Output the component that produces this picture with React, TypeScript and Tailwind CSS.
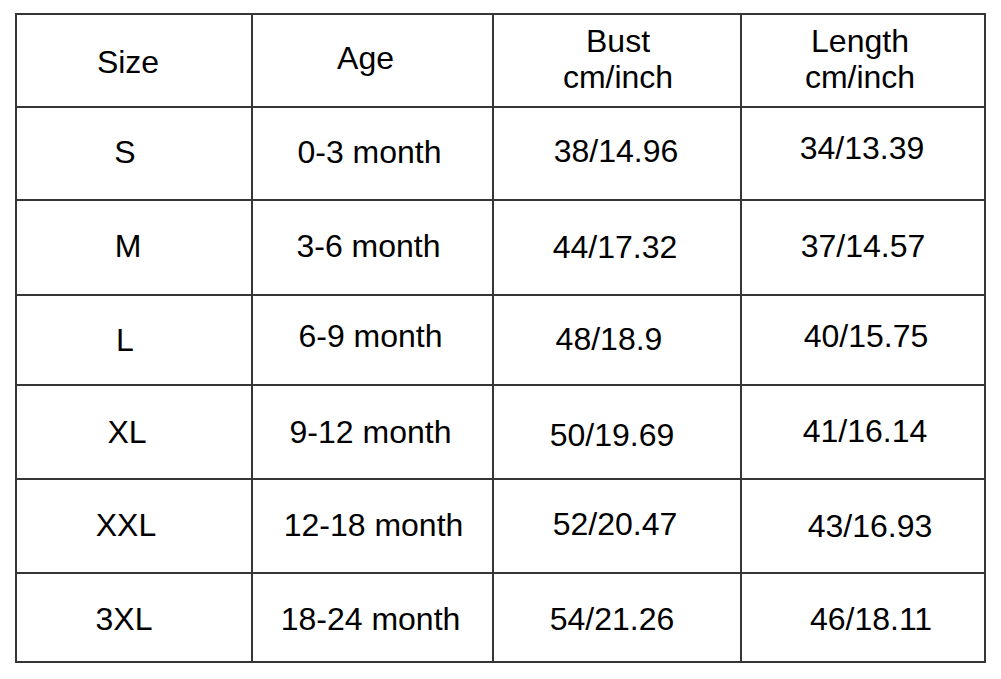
type Cell = { text: string[]; shift?: string };

const rows: Cell[][] = [
  [
    { text: ["Size"], shift: "translate-x-[-6px] translate-y-[2px]" },
    { text: ["Age"], shift: "translate-x-[-7px] translate-y-[-2px]" },
    { text: ["Bust", "cm/inch"], shift: "translate-x-[1px] translate-y-[-1px]" },
    { text: ["Length", "cm/inch"], shift: "translate-x-[-3px] translate-y-[-1px]" },
  ],
  [
    { text: ["S"], shift: "translate-x-[-9px] translate-y-[-1px]" },
    { text: ["0-3 month"], shift: "translate-x-[-3px] translate-y-[-1px]" },
    { text: ["38/14.96"], shift: "translate-x-[-1px] translate-y-[-2px]" },
    { text: ["34/13.39"], shift: "translate-x-[-1px] translate-y-[-5px]" },
  ],
  [
    { text: ["M"], shift: "translate-x-[-6px] translate-y-[-1px]" },
    { text: ["3-6 month"], shift: "translate-x-[-4px] translate-y-[-1px]" },
    { text: ["44/17.32"], shift: "translate-x-[-2px]" },
    { text: ["37/14.57"], shift: "translate-y-[-1px]" },
  ],
  [
    { text: ["L"], shift: "translate-x-[-9px] translate-y-[1px]" },
    { text: ["6-9 month"], shift: "translate-x-[-2px] translate-y-[-3px]" },
    { text: ["48/18.9"], shift: "translate-x-[-8px]" },
    { text: ["40/15.75"], shift: "translate-x-[3px] translate-y-[-3px]" },
  ],
  [
    { text: ["XL"], shift: "translate-x-[-7px] translate-y-[1px]" },
    { text: ["9-12 month"], shift: "translate-x-[-2px] translate-y-[1px]" },
    { text: ["50/19.69"], shift: "translate-x-[-5px] translate-y-[4px]" },
    { text: ["41/16.14"], shift: "translate-x-[2px]" },
  ],
  [
    { text: ["XXL"], shift: "translate-x-[-8px]" },
    { text: ["12-18 month"], shift: "translate-x-[1px]" },
    { text: ["52/20.47"], shift: "translate-x-[-2px] translate-y-[-1px]" },
    { text: ["43/16.93"], shift: "translate-x-[7px] translate-y-[1px]" },
  ],
  [
    { text: ["3XL"], shift: "translate-x-[-10px] translate-y-[2px]" },
    { text: ["18-24 month"], shift: "translate-x-[-2px] translate-y-[2px]" },
    { text: ["54/21.26"], shift: "translate-x-[-5px] translate-y-[2px]" },
    { text: ["46/18.11"], shift: "translate-x-[8px] translate-y-[2px]" },
  ],
];

export default function App() {
  return (
    <div className="h-[679px] w-[1001px] bg-white pl-[15px] pt-[13px] font-['Liberation_Sans',Arial,sans-serif] text-[32px] text-black">
      <div className="grid w-[971px] grid-cols-[234px_239px_246px_242px] grid-rows-[91px_91px_93px_88px_92px_92px_87px] gap-[2px] border-2 border-[#363636] bg-[#363636]">
        {rows.map((row, r) =>
          row.map((cell, c) => (
            <div key={`${r}-${c}`} className="flex items-center justify-center bg-white pb-[2px]">
              <div className={`flex flex-col items-center leading-[36px] ${cell.shift ?? ""}`}>
                {cell.text.map((t) => (
                  <span key={t}>{t}</span>
                ))}
              </div>
            </div>
          ))
        )}
      </div>
    </div>
  );
}
